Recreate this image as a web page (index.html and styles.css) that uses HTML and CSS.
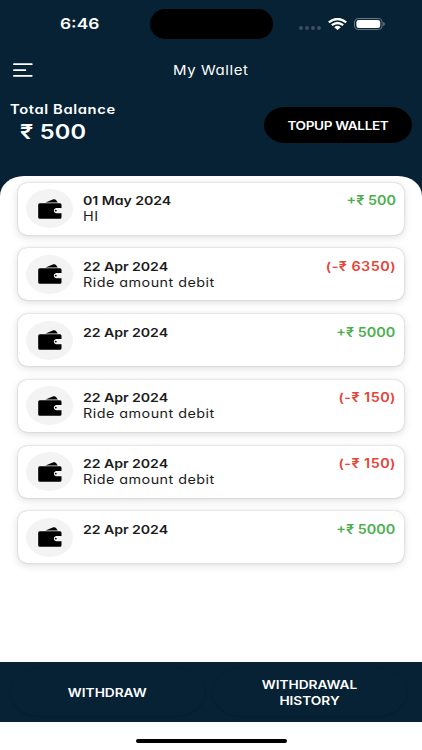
FILE: index.html
```
<!DOCTYPE html>
<html lang="en">

<head>
    <meta charset="UTF-8">
    <meta name="viewport" content="width=device-width, initial-scale=1.0">
    <title>My Wallet</title>
    <link rel="stylesheet" href="styles.css">
</head>

<body>
    <svg width="0" height="0" class="defs">
        <symbol id="wallet" viewBox="0 0 24 20">
            <path d="M7.5 3.5 15.4.3Q16.9-.2 18 1L19.8 3.5Z" />
            <path fill-rule="evenodd" d="M1.8 4.2H22q1.5 0 1.5 1.5V9H18a2.8 2.8 0 0 0 0 5.3h5.5v3.9q0 1.5-1.5 1.5H1.8Q.2 19.7.2 18.2V5.7Q.2 4.2 1.8 4.2Z" />
            <path d="M17.6 9.8h5.9v3.6h-5.9a1.8 1.8 0 0 1 0-3.6Z" fill="#f3f3f3" />
            <circle cx="17.8" cy="11.6" r=".9" />
        </symbol>
    </svg>

    <header>
        <div class="status">
            <span class="time"><b class="wide">6:46</b></span>
            <div class="island"></div>
            <div class="signals">
                <svg width="23" height="4" viewBox="0 0 23 4" class="dots">
                    <circle cx="2" cy="2" r="1.9" />
                    <circle cx="8" cy="2" r="1.9" />
                    <circle cx="14" cy="2" r="1.9" />
                    <circle cx="20" cy="2" r="1.9" />
                </svg>
                <svg width="19" height="12" viewBox="0 0 19 12" class="wifi">
                    <path d="M.8 4.3Q9.5-2.4 18.2 4.3M3.8 7.2Q9.5 2.7 15.2 7.2" fill="none" stroke="#fff" stroke-width="2.3" />
                    <path d="M6.2 9.2Q9.5 6.5 12.8 9.2L9.5 11.9Z" fill="#fff" />
                </svg>
                <svg width="31" height="12" viewBox="0 0 31 12" class="battery">
                    <rect x=".5" y=".5" width="27.6" height="11" rx="3.5" fill="none" stroke="#687783" />
                    <rect x="2.4" y="2" width="23.8" height="8" rx="2.3" fill="#fff" />
                    <path d="M29.2 4v4q1.7-.5 1.7-2t-1.7-2Z" fill="#687783" />
                </svg>
            </div>
        </div>

        <div class="navbar">
            <svg width="20" height="14" viewBox="0 0 20 14" class="menu">
                <path d="M.8 1.2H18.8M.8 7.2H12.4M.8 12.8H18.8" stroke="#fff" stroke-width="1.7" stroke-linecap="round" />
            </svg>
            <h1><span class="wide">My Wallet</span></h1>
        </div>

        <div class="balance">
            <div>
                <p class="label"><span class="wide">Total Balance</span></p>
                <p class="total"><span class="wide">₹ 500</span></p>
            </div>
            <button class="topup"><span class="wide">TOPUP WALLET</span></button>
        </div>
    </header>

    <main>
        <ul>
            <li>
                <div class="icon"><svg width="24" height="20"><use href="#wallet" /></svg></div>
                <div class="info">
                    <p class="date"><span class="wide">01 May 2024</span></p>
                    <p class="note"><span class="wide">HI</span></p>
                </div>
                <p class="amount credit"><span class="wide">+₹ 500</span></p>
            </li>
            <li>
                <div class="icon"><svg width="24" height="20"><use href="#wallet" /></svg></div>
                <div class="info">
                    <p class="date"><span class="wide">22 Apr 2024</span></p>
                    <p class="note"><span class="wide">Ride amount debit</span></p>
                </div>
                <p class="amount debit"><span class="wide">(-₹ 6350)</span></p>
            </li>
            <li>
                <div class="icon"><svg width="24" height="20"><use href="#wallet" /></svg></div>
                <div class="info">
                    <p class="date"><span class="wide">22 Apr 2024</span></p>
                </div>
                <p class="amount credit"><span class="wide">+₹ 5000</span></p>
            </li>
            <li>
                <div class="icon"><svg width="24" height="20"><use href="#wallet" /></svg></div>
                <div class="info">
                    <p class="date"><span class="wide">22 Apr 2024</span></p>
                    <p class="note"><span class="wide">Ride amount debit</span></p>
                </div>
                <p class="amount debit"><span class="wide">(-₹ 150)</span></p>
            </li>
            <li>
                <div class="icon"><svg width="24" height="20"><use href="#wallet" /></svg></div>
                <div class="info">
                    <p class="date"><span class="wide">22 Apr 2024</span></p>
                    <p class="note"><span class="wide">Ride amount debit</span></p>
                </div>
                <p class="amount debit"><span class="wide">(-₹ 150)</span></p>
            </li>
            <li>
                <div class="icon"><svg width="24" height="20"><use href="#wallet" /></svg></div>
                <div class="info">
                    <p class="date"><span class="wide">22 Apr 2024</span></p>
                </div>
                <p class="amount credit"><span class="wide">+₹ 5000</span></p>
            </li>
        </ul>
    </main>

    <footer>
        <button><span class="wide">WITHDRAW</span></button>
        <button><span class="wide">WITHDRAWAL<br>HISTORY</span></button>
    </footer>
    <div class="home"></div>
</body>

</html>
```

FILE: styles.css
```
* {
    box-sizing: border-box;
    margin: 0;
    padding: 0;
}

body {
    display: flex;
    flex-direction: column;
    height: 750px;
    overflow: hidden;
    background-color: #062234;
    font-family: Inter, "Open Sans", sans-serif;
    font-feature-settings: "cv11";
}

.defs {
    position: absolute;
}

.wide {
    display: inline-block;
    transform: scaleX(1.15);
    transform-origin: left;
    white-space: nowrap;
}

header {
    height: 175.5px;
    color: white;
}

.status {
    display: grid;
    grid-template-columns: 149.5px 123px 1fr;
    align-items: center;
    height: 47px;
}

.time {
    padding-left: 60px;
    font-size: 15.1px;
}

.time b {
    font-weight: 600;
}

.island {
    height: 30px;
    margin-top: 1px;
    border-radius: 15px;
    background-color: black;
}

.signals {
    display: flex;
    align-items: center;
    padding-left: 26.5px;
}

.dots {
    margin-top: 8px;
    fill: #3c5161;
}

.wifi {
    margin-left: 5.5px;
}

.battery {
    margin-left: 7px;
}

.navbar {
    display: grid;
    grid-template-columns: 1fr auto 1fr;
    align-items: center;
    height: 46px;
    padding: 0 13px 0 12.5px;
}

.navbar h1 {
    font-size: 13px;
    font-weight: 400;
    letter-spacing: 0.5px;
}

.navbar .wide,
button .wide {
    transform-origin: center;
}

.balance {
    display: flex;
    justify-content: space-between;
    align-items: flex-start;
    padding: 7px 10px 0 9.5px;
}

.label {
    height: 19px;
    font-size: 12.8px;
    font-weight: 600;
    line-height: 19px;
    letter-spacing: 0.55px;
}

.total {
    padding-left: 10px;
    font-size: 20.5px;
    font-weight: 600;
    line-height: 26px;
    letter-spacing: 0.2px;
}

button {
    border: none;
    color: white;
    font-family: inherit;
    font-size: 11.9px;
    font-weight: 600;
    line-height: 16px;
}

.topup {
    width: 148px;
    height: 36px;
    margin-top: 7px;
    padding-top: 1px;
    border-radius: 21px / 18px;
    background-color: black;
    font-size: 11.8px;
    letter-spacing: -0.3px;
}

main {
    flex: 1;
    padding: 7px 18px 0;
    border-radius: 24px 24px 0 0 / 20px 20px 0 0;
    background-color: white;
}

ul {
    display: flex;
    flex-direction: column;
    gap: 13.8px;
    list-style: none;
}

li {
    display: flex;
    height: 52px;
    padding: 6.5px 8.5px 6.5px 8px;
    border-radius: 9px;
    background-color: white;
    box-shadow: 0 0 1.5px rgba(0, 20, 40, 0.3), 0 2px 9px rgba(0, 0, 0, 0.14);
}

.icon {
    display: flex;
    justify-content: center;
    align-items: center;
    width: 47px;
    height: 39px;
    border-radius: 50%;
    background-color: #f3f3f3;
}

.info {
    flex: 1;
    padding: 4px 0 0 10px;
    color: #1c1c1c;
}

.date,
.note,
.amount {
    font-size: 12.5px;
    line-height: 16px;
    letter-spacing: 0.4px;
}

.date,
.amount {
    font-weight: 600;
}

.date {
    font-size: 12.3px;
    letter-spacing: -0.05px;
}

.amount {
    padding-top: 4px;
}

.amount .wide {
    transform-origin: right;
}

.credit {
    color: #4caf50;
    letter-spacing: 0;
}

.debit {
    color: #e54438;
}

footer {
    display: grid;
    grid-template-columns: 195px 195px;
    gap: 7px;
    height: 60px;
    padding: 6px 10px;
    background-color: #062234;
}

footer button {
    padding-top: 2px;
    border-radius: 30px / 24px;
    background-color: #062234;
    box-shadow: 0 1px 2px rgba(0, 0, 0, 0.13);
}

.home {
    height: 28px;
    padding: 17.3px 135.5px 6.5px;
    background-color: white;
}

.home::before {
    content: "";
    display: block;
    height: 4px;
    border-radius: 2px;
    background-color: black;
}
```
